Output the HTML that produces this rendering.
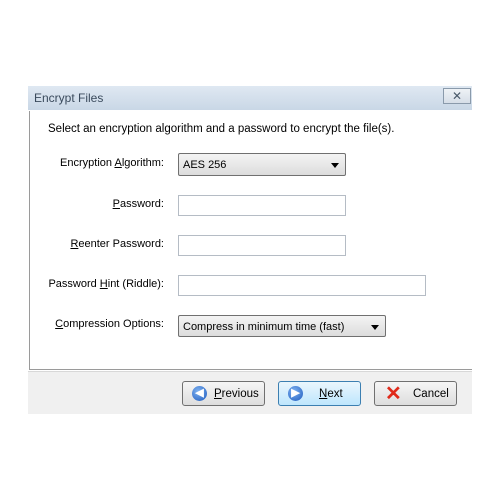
<!DOCTYPE html>
<html><head><style>
body{margin:0;width:500px;height:500px;background:#fff;position:relative;font-family:"Liberation Sans",sans-serif;font-size:11px;color:#000;overflow:hidden}
.a{position:absolute}
.title{left:28px;top:86px;width:444px;height:24px;background:linear-gradient(#dfe8f2,#c9d7e6);}
.title span{position:absolute;left:6px;top:5px;font-size:12px;color:#3a4a5c}
.close{left:443px;top:88px;width:28px;height:16px;border:1px solid #8a9aab;background:linear-gradient(#eef2f6,#d6dee8);box-sizing:border-box;text-align:center;font-size:12px;line-height:14px;color:#4a5a6a}
.content{left:29px;top:111px;width:443px;height:259px;border-left:1px solid #9a9a9a;border-bottom:1px solid #9a9a9a;box-sizing:border-box;background:#fff}
.footer{left:28px;top:371px;width:444px;height:42px;background:#f0f0f0;border-top:1px solid #d8d8d8}
.lbl{text-align:right;width:150px;left:14px}
.in{border:1px solid #b5bcc5;background:#fff;box-sizing:border-box;height:21px}
.sel{border:1px solid #707070;border-radius:2px;background:linear-gradient(#f4f4f4,#dcdcdc);box-sizing:border-box;height:23px;padding:5px 4px;font-size:11px}
.sel:after{content:"";position:absolute;right:6px;top:9px;border:4px solid transparent;border-top:5px solid #000}
.btn{height:25px;width:83px;top:381px;border:1px solid #707070;border-radius:3px;background:linear-gradient(#f6f6f6,#dddddd);box-sizing:border-box;font-size:11.5px;line-height:23px}
.btn span{position:absolute;left:31px;top:1px}
.ic{position:absolute;left:9px;top:4px;width:15px;height:15px;border-radius:50%;background:radial-gradient(circle at 40% 35%,#7fb2f0,#1e5bbf);color:#fff;font-size:11px;line-height:15px;text-align:center;font-weight:bold}
</style></head><body>
<div class="a title"><span>Encrypt Files</span></div>
<div class="a close">✕</div>
<div class="a content"></div>
<div class="a footer"></div>
<div class="a" style="left:48px;top:123px;font-size:11.5px">Select an encryption algorithm and a password to encrypt the file(s).</div>
<div class="a lbl" style="top:157px">Encryption <u>A</u>lgorithm:</div>
<div class="a sel" style="left:178px;top:153px;width:168px">AES 256</div>
<div class="a lbl" style="top:198px"><u>P</u>assword:</div>
<div class="a in" style="left:178px;top:195px;width:168px"></div>
<div class="a lbl" style="top:238px"><u>R</u>eenter Password:</div>
<div class="a in" style="left:178px;top:235px;width:168px"></div>
<div class="a lbl" style="top:278px">Password <u>H</u>int (Riddle):</div>
<div class="a in" style="left:178px;top:275px;width:248px"></div>
<div class="a lbl" style="top:318px"><u>C</u>ompression Options:</div>
<div class="a sel" style="left:178px;top:315px;width:208px;height:22px;padding-top:5px">Compress in minimum time (fast)</div>
<div class="a btn" style="left:182px"><div class="ic">◀</div><span><u>P</u>revious</span></div>
<div class="a btn" style="left:278px;border-color:#3c7fb1;background:linear-gradient(#eaf6fd,#bee6fd)"><div class="ic">▶</div><span style="left:40px"><u>N</u>ext</span></div>
<div class="a btn" style="left:374px"><div style="position:absolute;left:10px;top:1px;color:#e02a1a;font-size:20px;line-height:22px;font-weight:bold">✕</div><span style="left:38px">Cancel</span></div>
</body></html>
